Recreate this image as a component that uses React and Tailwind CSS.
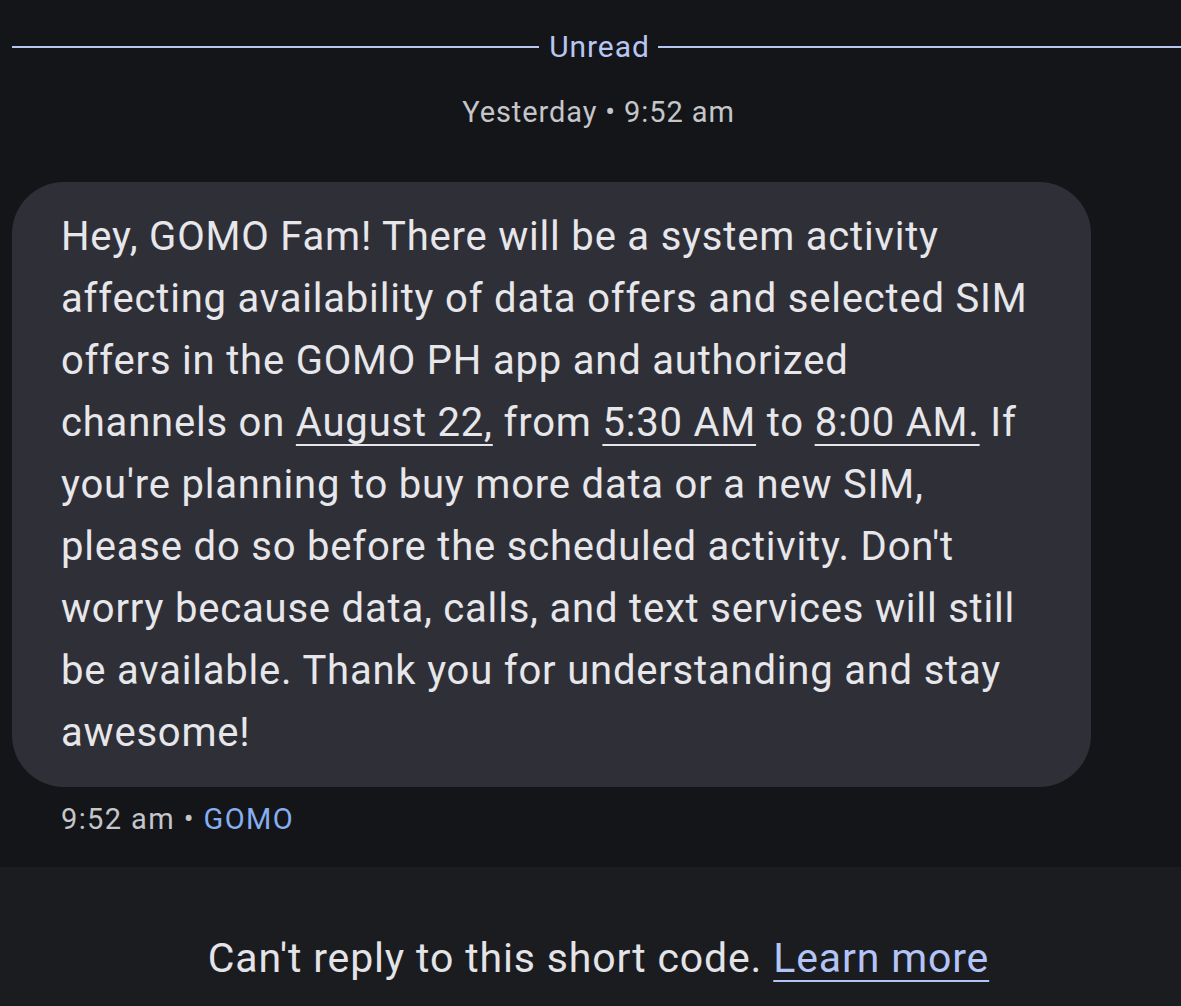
import React from 'react';

const Link = ({ children }) => (
    <span className="underline decoration-2 underline-offset-[8px]">{children}</span>
);

// message lines, wrapped as the phone wraps them
const Line = ({ children }) => <span className="block whitespace-nowrap">{children}</span>;

export default function App() {
    return (
        <div className="w-[1181px] h-[1006px] flex flex-col bg-[#141519] font-['Roboto',sans-serif] overflow-hidden">
            {/* Unread divider */}
            <div className="flex items-center ml-3 w-[1173px] shrink-0 pt-[28px] h-[66px]">
                <div className="flex-1 h-[2px] bg-[#b8c6f2]" />
                <span className="pl-[10px] pr-[8px] text-[30px] leading-none text-[#b8c6f2] tracking-[0.9px]">Unread</span>
                <div className="flex-1 h-[2px] bg-[#b8c6f2]" />
            </div>

            <div className="ml-3 w-[1173px] text-center text-[29px] leading-none text-[#c5c6ca] mt-[32px] tracking-[0.9px]">
                Yesterday • 9:52 am
            </div>

            {/* Message bubble */}
            <div className="ml-3 mt-[55px] w-[1079px] rounded-[52px] bg-[#2f3037] pl-[49px] pr-[16px] pt-[24px] pb-[23px]">
                <p className="text-[40px] leading-[62px] text-[#e7e7eb] tracking-[0.8px]">
                    <Line>Hey, GOMO Fam! There will be a system activity</Line>
                    <Line>affecting availability of data offers and selected SIM</Line>
                    <Line>offers in the GOMO PH app and authorized</Line>
                    <Line>channels on <Link>August 22,</Link> from <Link>5:30 AM</Link> to <Link>8:00 AM.</Link> If</Line>
                    <Line>you're planning to buy more data or a new SIM,</Line>
                    <Line>please do so before the scheduled activity. Don't</Line>
                    <Line>worry because data, calls, and text services will still</Line>
                    <Line>be available. Thank you for understanding and stay</Line>
                    <Line>awesome!</Line>
                </p>
            </div>

            <div className="pl-[61px] mt-[18px] text-[29px] leading-none text-[#c5c6ca] tracking-[1.4px]">
                9:52 am • <span className="text-[#86aef0]">GOMO</span>
            </div>

            {/* Footer */}
            <div className="mt-[33px] flex-1 bg-[#1b1c20] flex justify-center pl-[16px] pt-[71px]">
                <p className="text-[41px] leading-none text-[#e4e4e8] tracking-[0.85px]">
                    Can't reply to this short code.{' '}
                    <span className="text-[#b3c5f6] underline decoration-2 underline-offset-[8px]">Learn more</span>
                </p>
            </div>
        </div>
    );
}
